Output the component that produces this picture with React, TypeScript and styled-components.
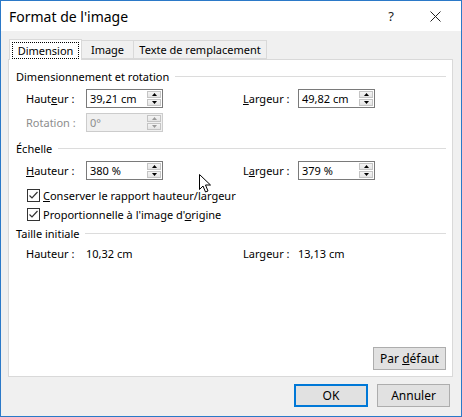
import styled, { createGlobalStyle } from 'styled-components'

const GlobalStyle = createGlobalStyle`
  html, body {
    margin: 0;
    padding: 0;
    background: #ffffff;
  }
  body {
    font-family: 'Noto Sans', 'Open Sans', sans-serif;
    font-size: 11px;
    color: #000000;
  }
`

const Window = styled.div`
  position: relative;
  width: 462px;
  height: 417px;
  box-sizing: border-box;
  border: 1px solid #2b79c8;
  background: #f0f0f0;
  display: flex;
  flex-direction: column;
`

const TitleBar = styled.div`
  height: 30px;
  background: #ffffff;
  display: flex;
  align-items: center;
  padding: 0 4px 0 8px;
  font-size: 14px;
`

const Title = styled.div`
  flex: 1;
`

const TitleButton = styled.div`
  width: 44px;
  height: 30px;
  display: flex;
  align-items: center;
  justify-content: center;
  font-size: 13px;
  color: #222;
`

const Body = styled.div`
  flex: 1;
  display: flex;
  flex-direction: column;
  padding: 8px 8px 0 7px;
`

const TabStrip = styled.div`
  display: flex;
  align-items: flex-end;
  height: 20px;
  padding-left: 1px;
  position: relative;
  z-index: 1;
`

const Tab = styled.div<{ $active?: boolean; $w: number }>`
  width: ${(p) => p.$w}px;
  height: ${(p) => (p.$active ? '21px' : '19px')};
  margin-bottom: ${(p) => (p.$active ? '-1px' : '0')};
  margin-left: ${(p) => (p.$active ? '0' : '-1px')};
  box-sizing: border-box;
  border: 1px solid #d9d9d9;
  border-bottom: ${(p) => (p.$active ? 'none' : '1px solid #d9d9d9')};
  background: ${(p) => (p.$active ? '#ffffff' : '#f0f0f0')};
  display: flex;
  align-items: center;
  justify-content: center;
  white-space: nowrap;
`

const FocusLabel = styled.span`
  outline: 1px dotted #000;
  padding: 0 5px;
  line-height: 15px;
`

const Panel = styled.div`
  flex: 1;
  background: #ffffff;
  border: 1px solid #d9d9d9;
  padding: 8px 6px 0 7px;
  display: flex;
  flex-direction: column;
`

const SectionHeader = styled.div<{ $mt: number }>`
  display: flex;
  align-items: center;
  height: 16px;
  margin-top: ${(p) => p.$mt}px;
  gap: 6px;
  &::after {
    content: '';
    flex: 1;
    height: 1px;
    background: #dcdcdc;
  }
`

const Grid = styled.div<{ $mt: number }>`
  display: grid;
  grid-template-columns: 60px 157px 55px 80px;
  align-items: center;
  margin-top: ${(p) => p.$mt}px;
  margin-left: 10px;
  min-height: 19px;
`

const Label = styled.span<{ $disabled?: boolean }>`
  color: ${(p) => (p.$disabled ? '#8d8d8d' : '#000')};
  white-space: nowrap;
`

const Value = styled.span`
  white-space: nowrap;
`

const InputBox = styled.div<{ $disabled?: boolean }>`
  width: 77px;
  height: 19px;
  box-sizing: border-box;
  border: 1px solid ${(p) => (p.$disabled ? '#cccccc' : '#7a7a7a')};
  background: ${(p) => (p.$disabled ? '#f0f0f0' : '#ffffff')};
  color: ${(p) => (p.$disabled ? '#8d8d8d' : '#000')};
  display: flex;
  align-items: center;
  padding-left: 3px;
`

const InputText = styled.span`
  flex: 1;
`

const Spinner = styled.div`
  width: 14px;
  height: 15px;
  margin-right: 1px;
  display: flex;
  flex-direction: column;
  gap: 1px;
`

const SpinButton = styled.div<{ $disabled?: boolean }>`
  flex: 1;
  box-sizing: border-box;
  border: 1px solid #c4c4c4;
  background: linear-gradient(#f4f4f4, #e4e4e4);
  display: flex;
  align-items: center;
  justify-content: center;
  svg {
    fill: ${(p) => (p.$disabled ? '#9a9a9a' : '#000')};
  }
`

const CheckRow = styled.label<{ $mt: number }>`
  display: flex;
  align-items: center;
  height: 16px;
  margin-top: ${(p) => p.$mt}px;
  margin-left: 11px;
  gap: 3px;
`

const Box = styled.span`
  width: 13px;
  height: 13px;
  box-sizing: border-box;
  border: 1px solid #333333;
  background: #fff;
  display: flex;
  align-items: center;
  justify-content: center;
`

const Spacer = styled.div`
  flex: 1;
`

const ButtonRow = styled.div<{ $pad: string }>`
  display: flex;
  justify-content: flex-end;
  gap: 9px;
  padding: ${(p) => p.$pad};
`

const Button = styled.div<{ $primary?: boolean }>`
  width: ${(p) => (p.$primary ? '74px' : '73px')};
  height: 23px;
  box-sizing: border-box;
  border: ${(p) => (p.$primary ? '2px solid #0078d7' : '1px solid #adadad')};
  background: #e1e1e1;
  display: flex;
  align-items: center;
  justify-content: center;
  font-size: 12px;
`

const Cursor = styled.svg`
  position: absolute;
  left: 198px;
  top: 173px;
`

const Arrow = ({ down, disabled }: { down?: boolean; disabled?: boolean }) => (
  <SpinButton $disabled={disabled}>
    <svg width="5" height="3" viewBox="0 0 5 3">
      {down ? <polygon points="0,0 5,0 2.5,3" /> : <polygon points="0,3 5,3 2.5,0" />}
    </svg>
  </SpinButton>
)

const Field = ({ value, disabled }: { value: string; disabled?: boolean }) => (
  <InputBox $disabled={disabled}>
    <InputText>{value}</InputText>
    <Spinner>
      <Arrow disabled={disabled} />
      <Arrow down disabled={disabled} />
    </Spinner>
  </InputBox>
)

const Check = () => (
  <Box>
    <svg width="11" height="11" viewBox="0 0 11 11">
      <polyline points="1.5,5.5 4,8 9.5,2" fill="none" stroke="#333" strokeWidth="1.2" />
    </svg>
  </Box>
)

export default function App() {
  return (
    <>
      <GlobalStyle />
      <Window>
        <TitleBar>
          <Title>Format de l'image</Title>
          <TitleButton>?</TitleButton>
          <TitleButton>
            <svg width="11" height="11" viewBox="0 0 11 11">
              <path d="M0.5 0.5 L10.5 10.5 M10.5 0.5 L0.5 10.5" stroke="#222" strokeWidth="1" />
            </svg>
          </TitleButton>
        </TitleBar>
        <Body>
          <TabStrip>
            <Tab $active $w={73}>
              <FocusLabel>Dimension</FocusLabel>
            </Tab>
            <Tab $w={53}>Image</Tab>
            <Tab $w={134}>Texte de remplacement</Tab>
          </TabStrip>
          <Panel>
            <SectionHeader $mt={0}>Dimensionnement et rotation</SectionHeader>
            <Grid $mt={5}>
              <Label>
                Haut<u>e</u>ur :
              </Label>
              <Field value="39,21 cm" />
              <Label>
                <u>L</u>argeur :
              </Label>
              <Field value="49,82 cm" />
            </Grid>
            <Grid $mt={5}>
              <Label $disabled>Rotation :</Label>
              <Field value="0°" disabled />
            </Grid>
            <SectionHeader $mt={8}>Échelle</SectionHeader>
            <Grid $mt={5}>
              <Label>
                <u>H</u>auteur :
              </Label>
              <Field value="380 %" />
              <Label>
                L<u>a</u>rgeur :
              </Label>
              <Field value="379 %" />
            </Grid>
            <CheckRow $mt={7}>
              <Check />
              <span>
                <u>C</u>onserver le rapport hauteur/largeur
              </span>
            </CheckRow>
            <CheckRow $mt={3}>
              <Check />
              <span>
                Proportionnelle à l'image d'<u>o</u>rigine
              </span>
            </CheckRow>
            <SectionHeader $mt={3}>Taille initiale</SectionHeader>
            <Grid $mt={3}>
              <Label>Hauteur :</Label>
              <Value>10,32 cm</Value>
              <Label>Largeur :</Label>
              <Value>13,13 cm</Value>
            </Grid>
            <Spacer />
            <ButtonRow $pad="0 0 6px 0">
              <Button>
                <span>
                  Par <u>d</u>éfaut
                </span>
              </Button>
            </ButtonRow>
          </Panel>
          <ButtonRow $pad="7px 3px 9px 0">
            <Button $primary>OK</Button>
            <Button>Annuler</Button>
          </ButtonRow>
        </Body>
        <Cursor width="14" height="20" viewBox="0 0 14 20">
          <path d="M0.5 0.5 L0.5 15.5 L4 12 L6.5 18 L9 17 L6.5 11 L11.5 11 Z" fill="#fff" stroke="#000" strokeWidth="1" />
        </Cursor>
      </Window>
    </>
  )
}
